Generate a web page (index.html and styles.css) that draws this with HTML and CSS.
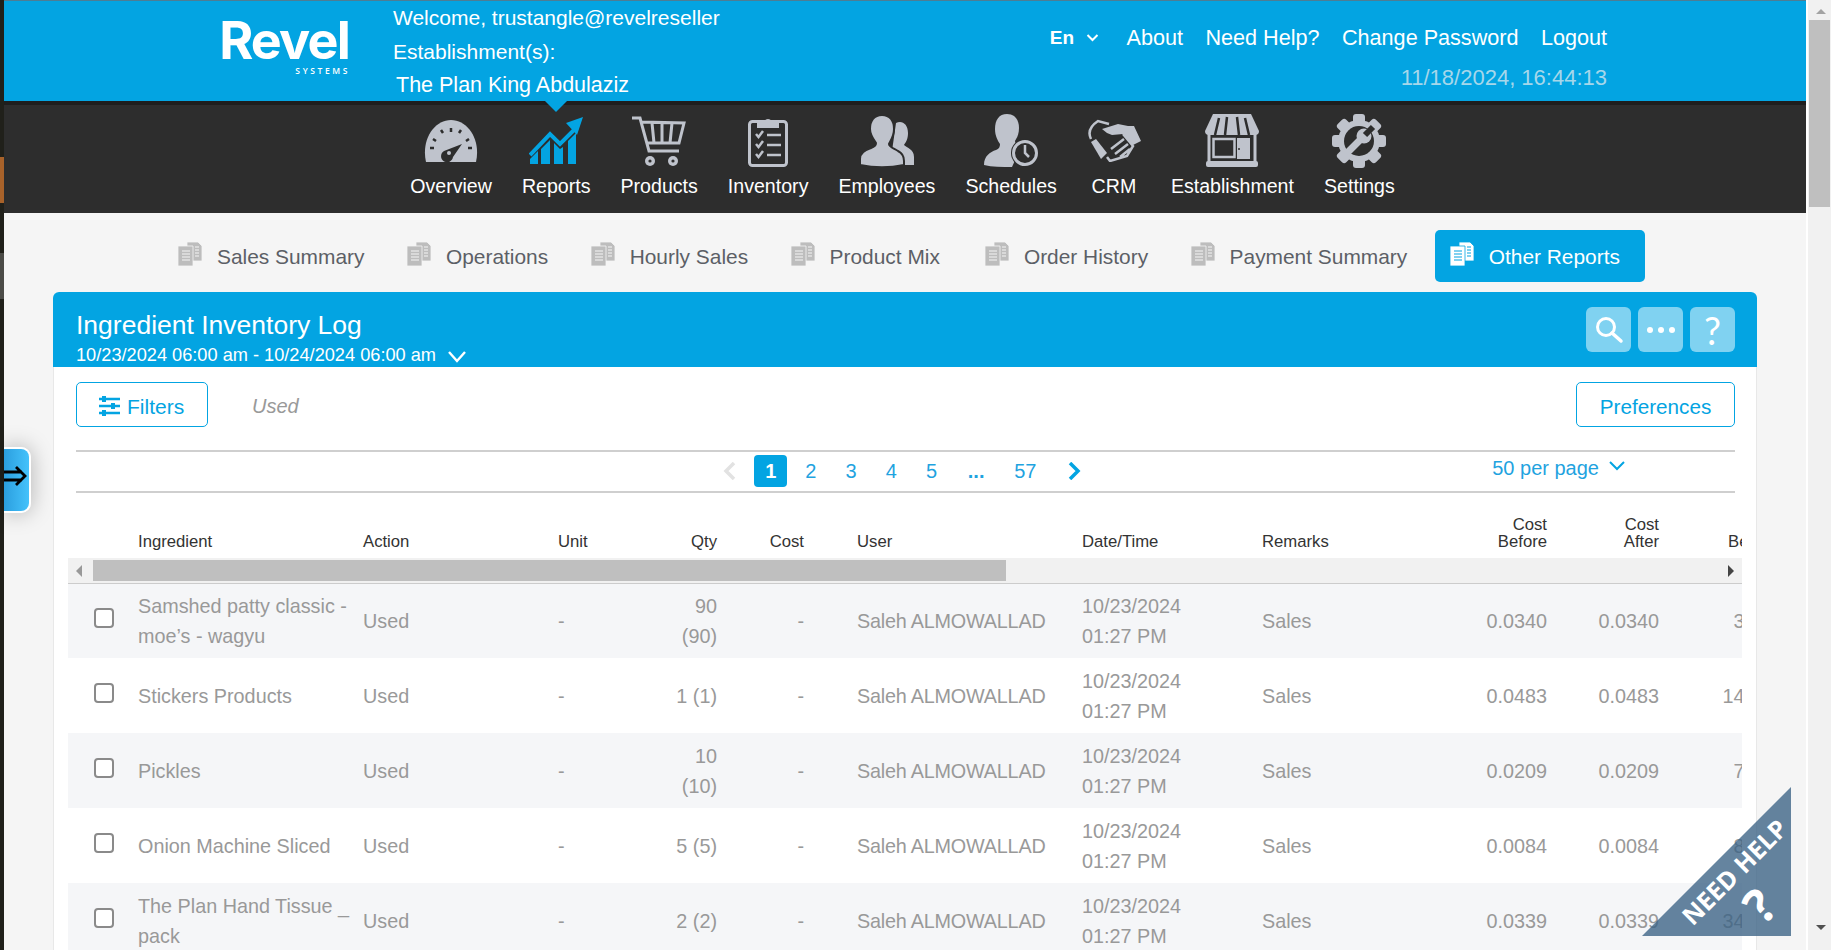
FILE: index.html
```html
<!DOCTYPE html>
<html lang="en">
<head>
<meta charset="utf-8">
<title>Ingredient Inventory Log</title>
<link rel="stylesheet" href="styles.css">
</head>
<body>
<div class="app">
  <div class="edge"><span class="edge-orange"></span><span class="edge-gray"></span></div>
  <div class="main">
    <header class="top">
      <div class="brand"><span class="brand-name">Revel</span><span class="brand-sub">SYSTEMS</span></div>
      <div class="who">
        <div>Welcome, trustangle@revelreseller</div>
        <div>Establishment(s):</div>
        <div class="who-est">The Plan King Abdulaziz</div>
      </div>
      <div class="top-right">
        <nav class="links">
          <a class="lang">En <svg class="lang-chev" viewBox="0 0 12 8"><path d="M1 1l5 5 5-5" fill="none" stroke="#fff" stroke-width="2"/></svg></a>
          <a>About</a><a>Need Help?</a><a>Change Password</a><a>Logout</a>
        </nav>
        <div class="clock">11/18/2024, 16:44:13</div>
      </div>
    </header>

    <nav class="mainnav">
      <a class="nav-item">
        <span class="nav-icon"><svg width="54" height="42" viewBox="0 0 54 42"><path class="ic" d="M2 42C-3 20 10 0 27 0s30 20 25 42z"/><path class="dk-s" d="M6 28h4M9 19l3 2M17 10l2 3M27 8v4M37 10l-2 3M45 19l-3 2M48 28h-4"/><path class="dk" d="M38 24L29 37a6 6 0 1 1-9-6z"/><circle class="ic" cx="25" cy="33" r="2"/></svg></span>
        <span>Overview</span>
      </a>
      <a class="nav-item active">
        <span class="nav-icon"><svg width="54" height="47" viewBox="0 0 54 47"><path class="bl" d="M1 47v-5l8-8v13zM12 47V32l9-9v24zM25 47V26l6 6 3-2v17zM39 47V24l8-8v31z"/><path class="bl-s" d="M1 38l20-21 10 10L47 11"/><path class="bl" d="M54 0L37 6l11 12z"/></svg></span>
        <span>Reports</span>
      </a>
      <a class="nav-item">
        <span class="nav-icon"><svg width="54" height="50" viewBox="0 0 54 50"><path class="st" d="M0 2h8l9 33h30M10 6l42 1-5 20H16M20 7l2 20M30 7v20M40 7l-2 20"/><circle class="ic" cx="18" cy="45" r="5"/><circle class="ic" cx="41" cy="45" r="5"/><circle class="dk" cx="18" cy="45" r="1.6"/><circle class="dk" cx="41" cy="45" r="1.6"/></svg></span>
        <span>Products</span>
      </a>
      <a class="nav-item">
        <span class="nav-icon"><svg width="40" height="53" viewBox="0 0 40 53"><rect class="st" x="1.5" y="7.5" width="37" height="44" rx="3"/><path class="ic" d="M9 14V7h7.500a4 4 0 0 1 7 0H31v7z"/><path class="thin" d="M8 20l2.500 3L15 17M8 30l2.500 3L15 27M8 40l2.500 3L15 37M19 21h14M19 31h14M19 41h14"/></svg></span>
        <span>Inventory</span>
      </a>
      <a class="nav-item">
        <span class="nav-icon"><svg width="54" height="52" viewBox="0 0 54 52"><path class="ic" d="M36 8c6-3 12 1 12 10 0 6-2 9-4 12 3 3 10 4 10 12v8H30z"/><path class="ic ring" d="M22 0c8 0 12 6 12 14 0 7-3 11-5 15 0 3 4 4 9 7 4 2 6 5 6 10v4c-14 3-30 3-44 0v-6c0-7 6-9 11-11 3-1 5-3 5-5-2-3-6-8-6-14C10 6 14 0 22 0z"/></svg></span>
        <span>Employees</span>
      </a>
      <a class="nav-item">
        <span class="nav-icon"><svg width="55" height="53" viewBox="0 0 55 53"><path class="ic" d="M23 0c8 0 12 6 12 14 0 6-2 10-4 13 0 3 3 4 6 6L28 53C18 53 8 53 0 51c0-9 6-13 12-15 3-1 4-3 4-6-2-3-5-8-5-15C11 6 15 0 23 0z"/><circle class="dk" cx="41" cy="39" r="14"/><circle class="st" cx="41" cy="39" r="11.500"/><path class="thin-ic" d="M41 31v8l4 4"/></svg></span>
        <span>Schedules</span>
      </a>
      <a class="nav-item">
        <span class="nav-icon"><svg width="54" height="43" viewBox="0 0 54 43"><path class="ic" d="M15 10L31 5l10 2h6l7 15-8 4-10-11-11 1-5-2z"/><path class="thin-ic" d="M36 15l10 12-6 10-17 5-3-4M24 30l13-10M28 35l13-10M33 38l10-8"/><path class="ic" d="M4 23l5-3 11 14-6 6z"/><path class="thin-ic" d="M4 20Q-1 10 11 2l11 3"/></svg></span>
        <span>CRM</span>
      </a>
      <a class="nav-item">
        <span class="nav-icon"><svg width="54" height="53" viewBox="0 0 54 53"><path class="st" d="M4 20v29M50 20v29"/><rect class="ic" x="1" y="47" width="52" height="6" rx="2"/><rect class="thin-ic" x="8.500" y="25" width="21" height="18"/><rect class="ic" x="32" y="24" width="13" height="21"/><circle class="dk" cx="34" cy="35" r="1"/><path class="ic" d="M8 0h38l8 17q0 4-4 4H4q-4 0-4-4z"/><path class="st-dk" d="M14 4l-4 17M22 3l-2 18M32 3l2 18M40 4l4 17"/></svg></span>
        <span>Establishment</span>
      </a>
      <a class="nav-item">
        <span class="nav-icon"><svg width="54" height="54" viewBox="0 0 54 54"><g class="ic"><circle cx="27" cy="27" r="21"/><rect x="21" y="0" width="12" height="54" rx="3"/><rect x="21" y="0" width="12" height="54" rx="3" transform="rotate(45 27 27)"/><rect x="21" y="0" width="12" height="54" rx="3" transform="rotate(90 27 27)"/><rect x="21" y="0" width="12" height="54" rx="3" transform="rotate(135 27 27)"/></g><circle class="dk" cx="27" cy="27" r="15"/><path class="wrench" d="M17 37l13-13"/><circle class="ic" cx="32" cy="22" r="7.500"/><path class="notch" d="M33 21l8-8"/></svg></span>
        <span>Settings</span>
      </a>
    </nav>

    <div class="tabs">
      <a class="tab"><svg class="doc" viewBox="0 0 24 24"><path class="doc-back" d="M9 0h11l4 4v15H9z"/><path class="doc-front" d="M0 4h15v20H0z"/><path class="doc-lines" d="M4 9h8M4 12h8M4 15h8M4 18h8M17 5h4M17 8h4M17 11h4M17 14h4"/></svg>Sales Summary</a>
      <a class="tab"><svg class="doc" viewBox="0 0 24 24"><path class="doc-back" d="M9 0h11l4 4v15H9z"/><path class="doc-front" d="M0 4h15v20H0z"/><path class="doc-lines" d="M4 9h8M4 12h8M4 15h8M4 18h8M17 5h4M17 8h4M17 11h4M17 14h4"/></svg>Operations</a>
      <a class="tab"><svg class="doc" viewBox="0 0 24 24"><path class="doc-back" d="M9 0h11l4 4v15H9z"/><path class="doc-front" d="M0 4h15v20H0z"/><path class="doc-lines" d="M4 9h8M4 12h8M4 15h8M4 18h8M17 5h4M17 8h4M17 11h4M17 14h4"/></svg>Hourly Sales</a>
      <a class="tab"><svg class="doc" viewBox="0 0 24 24"><path class="doc-back" d="M9 0h11l4 4v15H9z"/><path class="doc-front" d="M0 4h15v20H0z"/><path class="doc-lines" d="M4 9h8M4 12h8M4 15h8M4 18h8M17 5h4M17 8h4M17 11h4M17 14h4"/></svg>Product Mix</a>
      <a class="tab tab-spaced"><svg class="doc" viewBox="0 0 24 24"><path class="doc-back" d="M9 0h11l4 4v15H9z"/><path class="doc-front" d="M0 4h15v20H0z"/><path class="doc-lines" d="M4 9h8M4 12h8M4 15h8M4 18h8M17 5h4M17 8h4M17 11h4M17 14h4"/></svg>Order History</a>
      <a class="tab"><svg class="doc" viewBox="0 0 24 24"><path class="doc-back" d="M9 0h11l4 4v15H9z"/><path class="doc-front" d="M0 4h15v20H0z"/><path class="doc-lines" d="M4 9h8M4 12h8M4 15h8M4 18h8M17 5h4M17 8h4M17 11h4M17 14h4"/></svg>Payment Summary</a>
      <a class="tab active"><svg class="doc" viewBox="0 0 24 24"><path class="doc-back" d="M9 0h11l4 4v15H9z"/><path class="doc-front" d="M0 4h15v20H0z"/><path class="doc-lines" d="M4 9h8M4 12h8M4 15h8M4 18h8M17 5h4M17 8h4M17 11h4M17 14h4"/></svg>Other Reports</a>
    </div>

    <section class="card">
      <div class="card-head">
        <div>
          <h1 class="card-title">Ingredient Inventory Log</h1>
          <div class="card-range">10/23/2024 06:00 am - 10/24/2024 06:00 am <svg class="range-chev" viewBox="0 0 18 12"><path d="M1 1l8 9 8-9" fill="none" stroke="#fff" stroke-width="2.400"/></svg></div>
        </div>
        <div class="card-actions">
          <button class="icon-btn"><svg width="30" height="30" viewBox="0 0 30 30"><circle cx="12" cy="12" r="8.500" fill="none" stroke="#fff" stroke-width="3"/><path d="M18 18l9 8" stroke="#fff" stroke-width="3.500" stroke-linecap="round"/></svg></button>
          <button class="icon-btn"><svg width="30" height="8" viewBox="0 0 30 8"><circle cx="4" cy="4" r="3" fill="#fff"/><circle cx="15" cy="4" r="3" fill="#fff"/><circle cx="26" cy="4" r="3" fill="#fff"/></svg></button>
          <button class="icon-btn icon-q">?</button>
        </div>
      </div>
      <div class="card-body">
        <div class="toolbar">
          <button class="outline filters"><svg width="21" height="21" viewBox="0 0 21 21"><path d="M0 4h21M0 11h21M0 18h21" stroke="#03a4e2" stroke-width="2.500"/><path d="M5 1v6M14 8v6M5 15v6" stroke="#03a4e2" stroke-width="4"/></svg>Filters</button>
          <span class="applied">Used</span>
          <button class="outline prefs">Preferences</button>
        </div>
        <div class="pager">
          <div class="pages">
            <a class="pg pg-prev"><svg width="13" height="18" viewBox="0 0 13 18"><path d="M11 1L3 9l8 8" fill="none" stroke="#e2e2e2" stroke-width="3.500"/></svg></a>
            <a class="pg current">1</a><a class="pg">2</a><a class="pg">3</a><a class="pg">4</a><a class="pg">5</a>
            <a class="pg pg-wide pg-more">...</a><a class="pg pg-wide">57</a>
            <a class="pg pg-next"><svg width="13" height="18" viewBox="0 0 13 18"><path d="M2 1l8 8-8 8" fill="none" stroke="#03a4e2" stroke-width="3.500"/></svg></a>
          </div>
          <a class="perpage">50 per page<svg class="perpage-chev" viewBox="0 0 16 10"><path d="M1 1l7 7 7-7" fill="none" stroke="#03a4e2" stroke-width="2"/></svg></a>
        </div>

        <div class="grid-wrap">
          <table class="grid grid-head">
            <colgroup><col class="c-check"><col class="c-name"><col class="c-action"><col class="c-unit"><col class="c-qty"><col class="c-cost"><col class="c-user"><col class="c-date"><col class="c-rem"><col class="c-before"><col class="c-after"><col class="c-bal"></colgroup>
            <thead><tr>
              <th></th><th>Ingredient</th><th>Action</th><th>Unit</th><th class="r">Qty</th><th class="r">Cost</th><th class="user">User</th><th>Date/Time</th><th>Remarks</th><th class="r">Cost<br>Before</th><th class="r">Cost<br>After</th><th class="bal-head">Before</th>
            </tr></thead>
          </table>
          <div class="hbar"><span class="hbar-left"></span><span class="hbar-thumb"></span><span class="hbar-right"></span></div>
          <table class="grid grid-body">
            <colgroup><col class="c-check"><col class="c-name"><col class="c-action"><col class="c-unit"><col class="c-qty"><col class="c-cost"><col class="c-user"><col class="c-date"><col class="c-rem"><col class="c-before"><col class="c-after"><col class="c-bal"></colgroup>
            <tbody>
              <tr><td class="chk"><input type="checkbox"></td><td class="name">Samshed patty classic - moe’s - wagyu</td><td>Used</td><td>-</td><td class="r">90 (90)</td><td class="r">-</td><td class="user">Saleh ALMOWALLAD</td><td>10/23/2024<br>01:27 PM</td><td>Sales</td><td class="r">0.0340</td><td class="r">0.0340</td><td class="r">3.0600</td></tr>
              <tr><td class="chk"><input type="checkbox"></td><td class="name">Stickers Products</td><td>Used</td><td>-</td><td class="r">1 (1)</td><td class="r">-</td><td class="user">Saleh ALMOWALLAD</td><td>10/23/2024<br>01:27 PM</td><td>Sales</td><td class="r">0.0483</td><td class="r">0.0483</td><td class="r">14.4900</td></tr>
              <tr><td class="chk"><input type="checkbox"></td><td class="name">Pickles</td><td>Used</td><td>-</td><td class="r">10 (10)</td><td class="r">-</td><td class="user">Saleh ALMOWALLAD</td><td>10/23/2024<br>01:27 PM</td><td>Sales</td><td class="r">0.0209</td><td class="r">0.0209</td><td class="r">7.3150</td></tr>
              <tr><td class="chk"><input type="checkbox"></td><td class="name">Onion Machine Sliced</td><td>Used</td><td>-</td><td class="r">5 (5)</td><td class="r">-</td><td class="user">Saleh ALMOWALLAD</td><td>10/23/2024<br>01:27 PM</td><td>Sales</td><td class="r">0.0084</td><td class="r">0.0084</td><td class="r">8.4000</td></tr>
              <tr><td class="chk"><input type="checkbox"></td><td class="name">The Plan Hand Tissue _ pack</td><td>Used</td><td>-</td><td class="r">2 (2)</td><td class="r">-</td><td class="user">Saleh ALMOWALLAD</td><td>10/23/2024<br>01:27 PM</td><td>Sales</td><td class="r">0.0339</td><td class="r">0.0339</td><td class="r">34.0000</td></tr>
            </tbody>
          </table>
        </div>
      </div>
    </section>
  </div>
  <div class="pagebar"><span class="pb-up"></span><span class="pb-thumb"></span><span class="pb-down"></span></div>
</div>

<button class="drawer"><svg width="24" height="22" viewBox="0 0 24 22"><path d="M0 7h18M0 15h18M12 2l9 9-9 9" fill="none" stroke="#000" stroke-width="2.800"/></svg></button>
<a class="help"><span class="help-text">NEED HELP</span><span class="help-q">?</span></a>
</body>
</html>
```
FILE: styles.css
```css
* { box-sizing: border-box; }
html, body { margin: 0; height: 950px; overflow: hidden; }
body { font-family: "Liberation Sans", Arial, sans-serif; color: #5c5f66; background: #f5f5f5; }
a { text-decoration: none; color: inherit; }
button { font-family: inherit; cursor: pointer; }
h1 { margin: 0; font-weight: 400; }

.app { display: flex; height: 950px; overflow: hidden; }
.edge { width: 4px; flex: none; background: #20201a; display: flex; flex-direction: column; }
.edge-orange { height: 46px; margin-top: 157px; background: #a8622a; }
.edge-gray { height: 46px; margin-top: 50px; background: #4b4b47; }
.main { width: 1802px; flex: none; background: #f5f5f5; }

/* top header */
.top { height: 101px; background: #03a4e2; border-top: 1px solid #4d7d94; display: flex; color: #fff; font-size: 21px; }
.brand { margin-left: 216px; width: 129px; display: flex; flex-direction: column; align-items: flex-end; padding-top: 14px; }
.brand-name { font-family: "Inter", sans-serif; font-weight: 700; font-size: 52px; line-height: 51px; letter-spacing: -1.800px; }
.brand-sub { font-family: "Open Sans", sans-serif; font-size: 8.500px; line-height: 10px; font-weight: 600; letter-spacing: 2.600px; margin-right: -1px; }
.who { margin-left: 44px; line-height: 33.500px; }
.who-est { padding-left: 3px; margin-top: 1px; font-size: 21.500px; }
.top-right { margin-left: auto; padding-right: 199px; display: flex; flex-direction: column; align-items: flex-end; }
.links { display: flex; gap: 22.500px; margin-top: 21px; line-height: 32px; font-size: 21.600px; }
.lang { font-weight: 700; font-size: 19px; margin-right: 5px; display: flex; align-items: center; gap: 12px; }
.lang-chev { width: 13px; height: 8px; }
.clock { color: #a6d7ea; margin-top: 8px; line-height: 32px; font-size: 22px; }

/* main nav */
.mainnav { height: 112px; background: #2d2d2d; border-top: 4px solid #1e1e1e; display: flex; justify-content: center; gap: 30px; padding: 5px 5px 0 0; color: #fff; font-size: 19.600px; }
.nav-item { position: relative; display: flex; flex-direction: column; align-items: center; line-height: 30px; }
.nav-icon { height: 61px; display: flex; align-items: center; }
.nav-item.active::before { content: ""; position: absolute; left: 50%; top: -9px; margin-left: -11px; border: 11px solid transparent; border-top-color: #03a4e2; border-bottom: 0; }
.ic { fill: #bfc3cc; }
.ring { stroke: #2d2d2d; stroke-width: 2; }
.dk { fill: #2d2d2d; }
.dk-s { fill: none; stroke: #2d2d2d; stroke-width: 2.500; }
.bl { fill: #03a4e2; }
.bl-s { fill: none; stroke: #03a4e2; stroke-width: 4; }
.st { fill: none; stroke: #bfc3cc; stroke-width: 3; }
.st-dk { fill: none; stroke: #2d2d2d; stroke-width: 2.500; }
.thin { fill: none; stroke: #bfc3cc; stroke-width: 2.500; }
.thin-ic { fill: none; stroke: #bfc3cc; stroke-width: 2.500; }
.wrench { fill: none; stroke: #bfc3cc; stroke-width: 7; stroke-linecap: round; }
.notch { fill: none; stroke: #2d2d2d; stroke-width: 6; }

/* tabs */
.tabs { display: flex; gap: 3.500px; padding: 17px 0 0 159px; height: 79px; font-size: 20.900px; color: #5c5f66; }
.tab { height: 52px; padding: 2px 24px 0 15px; display: flex; align-items: center; gap: 15px; border-radius: 5px; }
.tab-spaced { margin-left: 2.500px; }
.tab.active { background: #03a4e2; color: #fff; padding-right: 25px; }
.doc { width: 24px; height: 24px; margin-top: -6px; flex: none; }
.doc-back, .doc-front { fill: #bdbdbd; stroke: #f5f5f5; stroke-width: .8; }
.doc-lines { fill: none; stroke: #f5f5f5; stroke-width: 1.200; }
.tab.active .doc-back, .tab.active .doc-front { fill: #fff; stroke: #03a4e2; }
.tab.active .doc-lines { stroke: #03a4e2; }

/* card */
.card { margin: 0 49px; background: #fff; border-radius: 6px 6px 0 0; height: 700px; }
.card-head { height: 75px; background: #03a4e2; border-radius: 6px 6px 0 0; padding: 17px 22px 0 23px; display: flex; justify-content: space-between; color: #fff; }
.card-title { font-size: 26.500px; line-height: 32px; }
.card-range { font-size: 18.200px; line-height: 24px; margin-top: 2px; display: flex; align-items: center; gap: 7px; white-space: pre; }
.range-chev { width: 18px; height: 12px; margin-top: 3px; }
.card-actions { display: flex; gap: 7px; margin-top: -2px; }
.icon-btn { width: 45px; height: 45px; border: 0; padding: 0; border-radius: 6px; background: #80d2f1; display: flex; align-items: center; justify-content: center; color: #fff; }
.icon-q { font-family: "Lato", sans-serif; font-size: 38px; font-weight: 400; }
.card-body { padding: 15px 21px 0 22px; border: solid #e8e8e8; border-width: 0 1px; height: 625px; overflow: hidden; }
.toolbar { display: flex; align-items: center; height: 45px; margin-bottom: 23px; }
.outline { height: 45px; border: 1.500px solid #03a4e2; border-radius: 5px; background: #fff; color: #03a4e2; font-size: 20.700px; }
.filters { width: 132px; display: flex; align-items: center; gap: 7px; padding: 4px 0 0 22px; font-size: 21px; }
.filters svg { margin-top: -3px; }
.applied { margin-left: 44px; padding-top: 4px; font-style: italic; color: #999; font-size: 20px; }
.prefs { margin-left: auto; width: 159px; padding: 4px 0 0; }

/* pager */
.pager { height: 43px; border: solid #cfcfcf; border-width: 2px 0; display: flex; color: #1fa3df; font-size: 20px; }
.pages { display: flex; gap: 7.200px; margin-left: 635px; padding-top: 3px; }
.pg { width: 33px; height: 32px; display: flex; align-items: center; justify-content: center; border-radius: 4px; }
.pg-prev { width: 36px; }
.pg-next { width: 41px; }
.pg-wide { width: 42px; }
.pg-more { font-weight: 700; }
.pg.current { background: #03a4e2; color: #fff; font-weight: 700; }
.perpage { margin-left: auto; padding: 1px 110px 0 0; line-height: 26px; display: flex; align-items: center; height: 30px; gap: 10px; }
.perpage-chev { width: 16px; height: 10px; margin-top: -4px; }

/* grid */
.grid-wrap { margin: 0 -7px 0 -8px; overflow: hidden; }
.grid { table-layout: fixed; border-collapse: collapse; width: 1734px; }
.c-check { width: 62px; } .c-name { width: 225px; } .c-action { width: 195px; } .c-unit { width: 97px; }
.c-qty { width: 78px; } .c-cost { width: 87px; } .c-user { width: 262px; } .c-date { width: 180px; }
.c-rem { width: 147px; } .c-before { width: 154px; } .c-after { width: 112px; } .c-bal { width: 135px; }
.grid th { height: 65px; vertical-align: bottom; text-align: left; padding: 0 8px 8px; font-size: 16.700px; line-height: 16.500px; font-weight: 400; color: #333; }
.grid td { height: 75px; padding: 0 8px; font-size: 19.800px; line-height: 30px; color: #999; vertical-align: middle; }
.grid tbody tr:first-child td { height: 74px; }
.grid tbody tr:nth-child(odd) { background: #f5f6f8; }
.grid .r { text-align: right; }
.grid .name { padding-right: 0; }
.grid .user { padding-left: 45px; white-space: nowrap; }
.grid td.user { letter-spacing: -.2px; }
.grid .bal-head { padding-left: 61px; }
.grid .chk { padding-left: 26px; }
.chk input { appearance: none; width: 20px; height: 20px; margin: 0 0 6px; border: 2px solid #8a8a8a; border-radius: 4px; background: #fff; display: block; }
.hbar { height: 26px; background: #f1f1f1; border-bottom: 1px solid #ccc; display: flex; padding-top: 2px; }
.hbar-left { width: 25px; position: relative; }
.hbar-left::before { content: ""; position: absolute; left: 8px; top: 5px; border: 6px solid transparent; border-right-color: #999; border-left: 0; }
.hbar-thumb { width: 913px; height: 21px; background: #bfbfbf; }
.hbar-right { margin-left: auto; width: 20px; position: relative; }
.hbar-right::before { content: ""; position: absolute; left: 6px; top: 5px; border: 6px solid transparent; border-left-color: #444; border-right: 0; }

/* page scrollbar */
.pagebar { width: 25px; flex: none; background: #f1f1f1; display: flex; flex-direction: column; align-items: center; padding-left: 2px; border-left: 2px solid #fff; position: relative; }
.pb-up { margin-top: 9px; border: 5.500px solid transparent; border-bottom-color: #a3a3a3; border-top: 0; }
.pb-thumb { width: 100%; height: 187px; margin-top: 6px; background: #bfbfbf; margin-left: -2px; }
.pb-down { margin-top: 718px; border: 5.500px solid transparent; border-top-color: #505050; border-bottom: 0; }

/* overlays */
.drawer { position: absolute; left: 4px; top: 447px; width: 27px; height: 66px; padding: 0; border: 2px solid #fff; border-left: 0; border-radius: 0 10px 10px 0; background: linear-gradient(90deg, #2b9fdf, #45c2fb); box-shadow: 0 0 22px rgba(0,0,0,.28); overflow: hidden; }
.drawer svg { display: block; margin-bottom: 8px; }
.help { position: absolute; left: 1642px; top: 787px; width: 149px; height: 149px; background: rgba(58,98,132,.78); clip-path: polygon(100% 0, 100% 100%, 0 100%); color: #fff; font-family: "Open Sans", sans-serif; font-weight: 700; }
.help-text { position: absolute; left: 24px; top: 70px; width: 135px; font-size: 25px; line-height: 30px; text-align: center; transform: rotate(-45deg); white-space: nowrap; }
.help-q { position: absolute; left: 97px; top: 93px; width: 40px; font-size: 48px; line-height: 50px; text-align: center; transform: rotate(-45deg); }
```
